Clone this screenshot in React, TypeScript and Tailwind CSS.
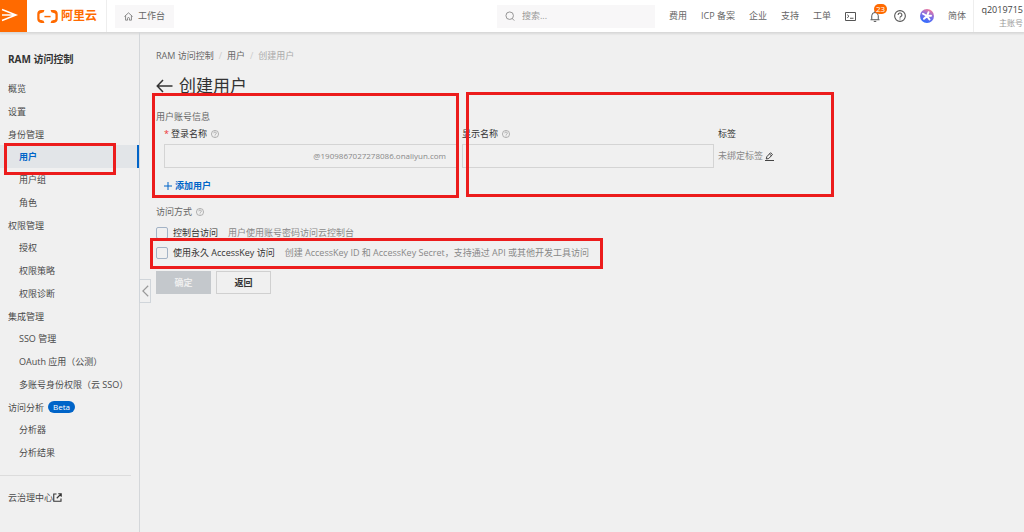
import clsx from 'clsx';
import { ReactNode } from 'react';

type NavGroup = {
  title: string;
  badge?: string;
  items: string[];
};

const groups: NavGroup[] = [
  { title: '身份管理', items: ['用户', '用户组', '角色'] },
  { title: '权限管理', items: ['授权', '权限策略', '权限诊断'] },
  {
    title: '集成管理',
    items: ['SSO 管理', 'OAuth 应用（公测）', '多账号身份权限（云 SSO）'],
  },
  { title: '访问分析', badge: 'Beta', items: ['分析器', '分析结果'] },
];

const headerLinks = ['费用', 'ICP 备案', '企业', '支持', '工单'];

const MenuMark = () => (
  <svg viewBox="0 0 27 32" className="h-8 w-[27px]" fill="none" stroke="#fff" strokeWidth="1.5">
    <path d="M2 9.500 16 15 2 20.500M2 15H15" />
  </svg>
);

const CloudMark = () => (
  <svg viewBox="0 0 63 40" className="h-[13px] w-[21px]" fill="#ff6a00">
    <path d="M22 0H12C5 0 0 5 0 12v16c0 7 5 12 12 12h10l-2.500-7-7-2C9 30.500 7 29 7 26V14c0-3 2-4.500 5.500-5l7-2z" />
    <path d="M41 0h10c7 0 12 5 12 12v16c0 7-5 12-12 12H41l2.500-7 7-2c3.500-.5 5.500-2 5.500-5V14c0-3-2-4.500-5.500-5l-7-2z" />
    <path d="M22 18h19v4.500H22z" />
  </svg>
);

const HomeIcon = () => (
  <svg viewBox="0 0 16 16" className="size-[9px]" fill="none" stroke="#777" strokeWidth="1.5">
    <path d="M.8 8 8 1.500 15.200 8M2.800 7v7.500h3.500V11.500a1.700 1.700 0 0 1 3.400 0v3h3.500V7" />
  </svg>
);

const SearchIcon = () => (
  <svg viewBox="0 0 16 16" className="size-[10px]" fill="none" stroke="#888" strokeWidth="1.400">
    <circle cx="7.500" cy="7.500" r="6" />
    <path d="m11.500 12 3.300 3.300" />
  </svg>
);

const TerminalIcon = () => (
  <svg viewBox="0 0 22 18" className="h-[9px] w-[11px]" fill="none" stroke="#555" strokeWidth="2">
    <path d="M1 1h20v16H1zM4.500 5.500 8 8.500 4.500 11.500M10 12.500h7" />
  </svg>
);

const BellIcon = () => (
  <svg viewBox="0 0 20 22" className="h-[11px] w-[10px]" fill="none" stroke="#555" strokeWidth="2">
    <path d="M10 0v3M1 17.500h18M3.500 17V9.500a6.500 6.500 0 0 1 13 0V17M7.500 20.800h5" />
  </svg>
);

const HelpIcon = ({ className }: { className: string }) => (
  <svg viewBox="0 0 22 22" className={className} fill="none" stroke="currentColor" strokeWidth="2">
    <circle cx="11" cy="11" r="9.800" />
    <path d="M7.500 9a3.500 3.500 0 1 1 5 3.100c-1 .5-1.500 1-1.500 2.100M11 15.500v2" />
  </svg>
);

const AssistantIcon = () => (
  <svg viewBox="0 0 28 28" className="size-[14px]">
    <defs>
      <linearGradient id="assistant" x1="0.8" y1="0" x2="0.4" y2="1">
        <stop offset="0" stopColor="#ff7a90" />
        <stop offset="0.45" stopColor="#8a6fe0" />
        <stop offset="1" stopColor="#2f6bff" />
      </linearGradient>
    </defs>
    <circle cx="14" cy="14" r="14" fill="url(#assistant)" />
    <path
      d="M14 14 17 6.500M14 14 6 9.500M14 14 22 13.500M14 14 8 19.500M14 14 19 21"
      stroke="#fff"
      strokeWidth="4"
      strokeLinecap="round"
    />
  </svg>
);

const ExternalIcon = () => (
  <svg viewBox="0 0 18 18" className="size-[9px]" fill="none" stroke="#333" strokeWidth="2.200">
    <path d="M7 2H1.500v14.500H16V11M10.500 1.500h6v6M16 2 7.500 10.500" />
  </svg>
);

const EditIcon = () => (
  <svg viewBox="0 0 18 18" className="size-[9px]" fill="none" stroke="#444" strokeWidth="2">
    <path d="M2.500 14 3.500 9.500 11 1.500l4 3.500-7.500 8zM9 4l3.800 3.500M0 17h18" />
  </svg>
);

const Header = () => (
  <header className="flex h-8 items-center bg-white text-[#666] shadow-[0_1px_2px_1px_rgba(0,0,0,0.1)]">
    <button aria-label="菜单" className="h-full w-[27px] shrink-0 bg-[#ff6a00]">
      <MenuMark />
    </button>
    <a
      href="#"
      className="flex h-full w-20 shrink-0 items-center gap-[3px] border-r border-[#eee] pl-[10px] text-xs font-bold text-[#ff6a00]"
    >
      <CloudMark />
      阿里云
    </a>
    <a href="#" className="ml-2 flex h-[23px] shrink-0 items-center gap-[5px] bg-[#f8f7f8] px-[9px]">
      <HomeIcon />
      工作台
    </a>
    <label className="ml-auto flex h-[23px] w-[158px] items-center gap-[7px] bg-[#f8f7f8] px-2">
      <SearchIcon />
      <input
        type="search"
        aria-label="搜索"
        placeholder="搜索..."
        className="min-w-0 flex-1 bg-transparent outline-none placeholder:text-[#999]"
      />
    </label>
    <nav className="ml-[14px] flex shrink-0 items-center gap-[14px]">
      {headerLinks.map((link) => (
        <a key={link} href="#">
          {link}
        </a>
      ))}
      <button aria-label="命令行">
        <TerminalIcon />
      </button>
      <button aria-label="消息" className="relative">
        <BellIcon />
        <span className="absolute -top-[7px] left-1 flex h-[10px] items-center rounded-full bg-[#ff6a00] px-[2px] text-[8px] text-white">
          23
        </span>
      </button>
      <button aria-label="帮助" className="text-[#555]">
        <HelpIcon className="size-3" />
      </button>
      <button aria-label="助手">
        <AssistantIcon />
      </button>
      <button>简体</button>
    </nav>
    <div className="ml-[7px] flex h-full w-[51px] shrink-0 flex-col items-end justify-center border-l border-[#eee] pr-px">
      <span className="leading-[13px] text-[#444]">q2019715</span>
      <span className="text-[8px] leading-[13px] text-[#999]">主账号</span>
    </div>
  </header>
);

const Sidebar = () => (
  <aside className="w-[140px] shrink-0 border-r border-[#d4d7da] text-[#4a4a4a]">
    <h2 className="pt-[19px] pl-2 text-[10px] leading-4 font-bold text-[#333]">RAM 访问控制</h2>
    <nav className="mt-[10px] leading-[23px]">
      {['概览', '设置'].map((item) => (
        <a key={item} href="#" className="block pl-2">
          {item}
        </a>
      ))}
      {groups.map((group) => (
        <section key={group.title}>
          <h3 className="flex h-[22px] items-center gap-1 pl-2">
            {group.title}
            {group.badge && (
              <span className="rounded-full bg-[#0064c8] px-[5px] text-[8px] leading-3 text-white">
                {group.badge}
              </span>
            )}
          </h3>
          {group.items.map((item) => (
            <a
              key={item}
              href="#"
              className={clsx(
                'block pl-[19px] whitespace-nowrap',
                item === '用户' && 'border-r-2 border-[#0064c8] bg-[#e2e5e8] font-bold text-[#0064c8]'
              )}
            >
              {item}
            </a>
          ))}
        </section>
      ))}
    </nav>
    <hr className="mt-[11px] mr-2 border-[#dcdcdc]" />
    <a href="#" className="mt-[10px] flex h-[23px] items-center pl-2">
      云治理中心
      <ExternalIcon />
    </a>
  </aside>
);

type AccessOptionProps = {
  id: string;
  label: string;
  children: ReactNode;
};

const AccessOption = ({ id, label, children }: AccessOptionProps) => (
  <div className="flex h-5 items-center">
    <input
      id={id}
      type="checkbox"
      className="size-3 appearance-none rounded-xs border border-[#a3b3c6] checked:bg-[#0064c8]"
    />
    <label htmlFor={id} className="ml-[5px] text-[#333]">
      {label}
    </label>
    <span className="ml-[10px] text-[#888]">{children}</span>
  </div>
);

const CreateUser = () => (
  <main className="relative min-w-0 flex-1 px-4 text-[#666]">
    <nav className="flex gap-[5px] pt-4 leading-4" aria-label="路径">
      <a href="#">RAM 访问控制</a>
      <span className="text-[#ccc]">/</span>
      <a href="#">用户</a>
      <span className="text-[#ccc]">/</span>
      <span className="text-[#aaa]">创建用户</span>
    </nav>
    <h1 className="mt-[10px] flex items-center gap-[6px] text-[17px] leading-6 text-[#333]">
      <a href="#" aria-label="返回上一页">
        <svg viewBox="0 0 34 28" className="h-[14px] w-[17px]" fill="none" stroke="#333" strokeWidth="3">
          <path d="M14 2 2.500 14 14 26M2.500 14H33" />
        </svg>
      </a>
      创建用户
    </h1>

    <h2 className="mt-[11px] leading-4">用户账号信息</h2>
    <div className="flex gap-1 pl-2">
      <div className="w-[294px] min-w-0">
        <label htmlFor="login" className="flex h-[18px] items-center text-[#333]">
          <span className="mr-[2px] text-[#e33]">*</span>
          登录名称
          <HelpIcon className="ml-1 size-2 text-[#999]" />
        </label>
        <div className="mt-px flex h-6 items-center border border-[#d4d4d4] pr-[11px] pl-2">
          <input id="login" className="min-w-0 flex-1 bg-transparent outline-none" />
          <span className="text-[8px] text-[#888]">@1909867027278086.onaliyun.com</span>
        </div>
      </div>
      <div className="w-[252px] min-w-0">
        <label htmlFor="display" className="flex h-[18px] items-center text-[#333]">
          显示名称
          <HelpIcon className="ml-1 size-2 text-[#999]" />
        </label>
        <input
          id="display"
          className="mt-px block h-6 w-full border border-[#d4d4d4] bg-transparent px-2 outline-none"
        />
      </div>
      <div>
        <div className="flex h-[18px] items-center text-[#333]">标签</div>
        <div className="mt-px flex h-6 items-center gap-[2px] text-[#888]">
          未绑定标签
          <button aria-label="编辑标签">
            <EditIcon />
          </button>
        </div>
      </div>
    </div>
    <button className="mt-[10px] ml-2 flex h-4 items-center gap-[3px] font-bold text-[#0064c8]">
      <svg viewBox="0 0 8 8" className="size-2" stroke="#0064c8" strokeWidth="1">
        <path d="M4 0v8M0 4h8" />
      </svg>
      添加用户
    </button>

    <h2 className="mt-[10px] flex h-4 items-center gap-1">
      访问方式
      <HelpIcon className="size-2 text-[#999]" />
    </h2>
    <div className="mt-[3px]">
      <AccessOption id="console" label="控制台访问">
        用户使用账号密码访问云控制台
      </AccessOption>
      <AccessOption id="access-key" label="使用永久 AccessKey 访问">
        创建 AccessKey ID 和 AccessKey Secret，支持通过 API 或其他开发工具访问
      </AccessOption>
    </div>
    <div className="mt-2 flex gap-[5px]">
      <button className="h-[23px] w-[55px] bg-[#c4c8cc] font-bold text-[#eee]">确定</button>
      <button className="h-[23px] w-[55px] border border-[#d0d0d0] font-bold text-[#333]">
        返回
      </button>
    </div>

    <button
      aria-label="收起侧栏"
      className="absolute top-[247px] -left-px flex h-6 w-3 items-center justify-center border border-[#d0d5da] bg-[#f0f0f0]"
    >
      <svg viewBox="0 0 7 12" className="h-3 w-[7px]" fill="none" stroke="#999" strokeWidth="1.200">
        <path d="M6.200.8.900 6l5.300 5.200" />
      </svg>
    </button>
  </main>
);

// Red frames drawn over the page to point out the fields
const Highlight = ({ className }: { className: string }) => (
  <div className={clsx('pointer-events-none absolute border-3 border-[#ec1c1c]', className)} />
);

export default function App() {
  return (
    <div className="relative flex min-h-screen flex-col overflow-hidden bg-[#f0f0f0] font-['Open_Sans','Noto_Sans_CJK_SC',sans-serif] text-[9px] leading-4">
      <Header />
      <div className="flex flex-1">
        <Sidebar />
        <CreateUser />
      </div>
      <Highlight className="top-[143px] left-1 h-8 w-28" />
      <Highlight className="top-[93px] left-[152px] h-[105px] w-[307px]" />
      <Highlight className="top-[92px] left-[466px] h-[105px] w-[368px]" />
      <Highlight className="top-[238px] left-[150px] h-[31px] w-[453px]" />
    </div>
  );
}
